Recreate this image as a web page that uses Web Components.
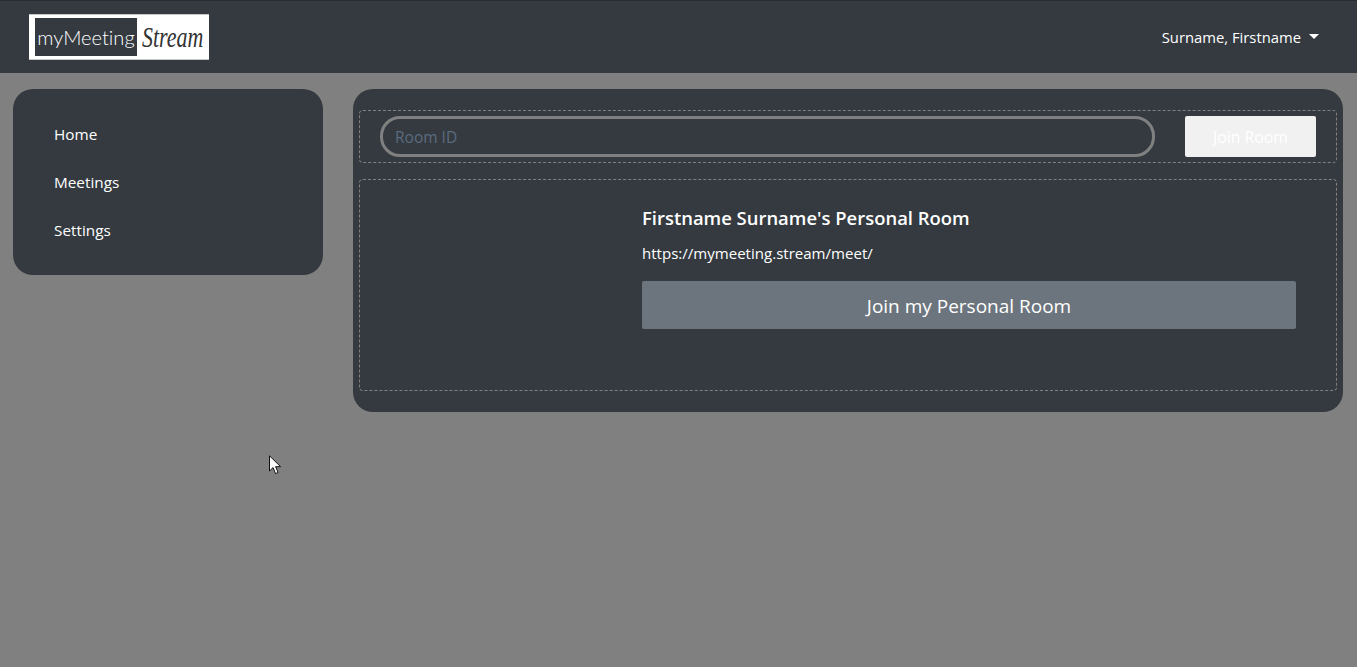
<!DOCTYPE html>
<html lang="en">
<head>
<meta charset="utf-8">
<title>myMeeting Stream</title>
<style>
  html, body { margin: 0; height: 100%; }
  body {
    background: #808080;
    color: #fff;
    font-family: "Open Sans", "Noto Sans", sans-serif;
    font-size: 15px;
  }
</style>
</head>
<body>
<app-shell>
  <top-bar user="Surname, Firstname"></top-bar>
  <side-nav slot="side">
    <nav-link>Home</nav-link>
    <nav-link>Meetings</nav-link>
    <nav-link>Settings</nav-link>
  </side-nav>
  <room-panel slot="main">
    <join-form></join-form>
    <personal-room owner="Firstname Surname's Personal Room" url="https://mymeeting.stream/meet/"></personal-room>
  </room-panel>
  <mouse-cursor></mouse-cursor>
</app-shell>

<script>
// small helper so that each component only has to declare its html
function shadow(el, html) {
  el.attachShadow({mode: 'open'})
  el.shadowRoot.innerHTML = html
}

class AppShell extends HTMLElement {
  constructor() {
    super()
    shadow(this, `
      <style>
        :host { display: block; position: relative; min-height: 667px; }
        .cols { display: flex; align-items: flex-start; gap: 30px; padding: 16px 14px 0 13px; }
      </style>
      <slot></slot>
      <div class="cols">
        <slot name="side"></slot>
        <slot name="main"></slot>
      </div>`)
  }
}

class TopBar extends HTMLElement {
  constructor() {
    super()
    shadow(this, `
      <style>
        :host {
          display: flex; align-items: center; justify-content: space-between;
          box-sizing: border-box; height: 73px; padding: 0 38px 0 29px;
          background: #343a40; border-top: 1px solid #2a2d30;
        }
        .logo {
          display: flex; align-items: center; box-sizing: border-box; overflow: hidden;
          width: 180px; height: 46px; padding: 3px 0 3px 6px; background: #fff;
          box-shadow: inset 0 1px #c4c6c9, inset 0 -1px #c4c6c9;
        }
        .my {
          flex: none; width: 102px; height: 38px; background: #343a40; color: #fff;
          font: 300 20.1px/38px Lato, sans-serif; text-align: center; white-space: nowrap;
          font-variant-ligatures: none;
        }
        .stream {
          display: inline-block; flex: none; margin-left: 5px; color: #333;
          font: italic 400 30px/38px "Liberation Serif", serif;
          transform: scaleX(.73); transform-origin: left center;
        }
        .user { display: flex; align-items: center; gap: 8px; font-size: 14.8px; }
        .caret {
          width: 0; height: 0; margin-top: -2px;
          border-top: 5px solid #fff; border-left: 5px solid transparent; border-right: 5px solid transparent;
        }
      </style>
      <div class="logo"><div class="my">myMeeting</div><span class="stream">Stream</span></div>
      <div class="user"><span id="name"></span><i class="caret"></i></div>`)
    this.shadowRoot.querySelector('#name').textContent = this.getAttribute('user')
  }
}

class SideNav extends HTMLElement {
  constructor() {
    super()
    shadow(this, `
      <style>
        :host {
          display: flex; flex-direction: column; flex: none; box-sizing: border-box;
          width: 310px; height: 186px; padding: 21px 0 0 41px;
          background: #343a40; border-radius: 20px;
        }
      </style>
      <slot></slot>`)
  }
}

class NavLink extends HTMLElement {
  constructor() {
    super()
    shadow(this, `
      <style>
        :host { display: block; height: 48px; line-height: 48px; color: #fff; font-size: 15.3px; }
      </style>
      <slot></slot>`)
  }
}

class RoomPanel extends HTMLElement {
  constructor() {
    super()
    shadow(this, `
      <style>
        :host {
          display: flex; flex-direction: column; gap: 16px; flex: 1; box-sizing: border-box;
          height: 323px; padding: 21px 6px 0;
          background: #343a40; border-radius: 20px;
        }
      </style>
      <slot></slot>`)
  }
}

class JoinForm extends HTMLElement {
  constructor() {
    super()
    shadow(this, `
      <style>
        :host {
          display: flex; gap: 30px; box-sizing: border-box; height: 53px; padding: 5px 20px 0;
          border: 1px dashed #808080; border-radius: 4px;
        }
        input {
          flex: 1; min-width: 0; box-sizing: border-box; height: 41px; padding: 0 12px;
          background: transparent; border: 3px solid #808080; border-radius: 20px;
          color: #fff; font: 400 15.5px "Open Sans", sans-serif; outline: none;
        }
        input::placeholder { color: #5b6b7d; opacity: 1; }
        button {
          flex: none; width: 131px; height: 41px; padding: 0;
          background: #f1f1f1; border: 0; border-radius: 2px;
          color: #fff; font: 400 15.8px "Open Sans", sans-serif;
        }
      </style>
      <input type="text" placeholder="Room ID">
      <button>Join Room</button>`)
  }
}

class PersonalRoom extends HTMLElement {
  constructor() {
    super()
    shadow(this, `
      <style>
        :host {
          display: block; box-sizing: border-box; height: 212px; padding: 25px 40px 0 282px;
          border: 1px dashed #808080; border-radius: 4px;
        }
        h2 { margin: 0; font-size: 18.45px; font-weight: 600; line-height: 26px; }
        p { margin: 10px 0 0; font-size: 15.05px; line-height: 24px; }
        button {
          display: block; width: 100%; height: 48px; margin-top: 16px; padding: 1px 0 0;
          background: #6c757d; border: 0; border-radius: 2px;
          color: #fff; font: 400 19px "Open Sans", sans-serif;
        }
      </style>
      <h2 id="owner"></h2>
      <p id="url"></p>
      <button>Join my Personal Room</button>`)
    this.shadowRoot.querySelector('#owner').textContent = this.getAttribute('owner')
    this.shadowRoot.querySelector('#url').textContent = this.getAttribute('url')
  }
}

// the pointer caught in the screenshot, it lies over the page
class MouseCursor extends HTMLElement {
  constructor() {
    super()
    shadow(this, `
      <style>
        :host { position: absolute; left: 269px; top: 455px; width: 13px; height: 20px; line-height: 0; }
      </style>
      <svg width="13" height="20" viewBox="0 0 13 20">
        <path d="M.5.8V16l3.6-3.4 2.4 6 2.6-1.1-2.5-5.8h5z" fill="#fff" stroke="#111" stroke-width="1"/>
      </svg>`)
  }
}

customElements.define('app-shell', AppShell)
customElements.define('top-bar', TopBar)
customElements.define('side-nav', SideNav)
customElements.define('nav-link', NavLink)
customElements.define('room-panel', RoomPanel)
customElements.define('join-form', JoinForm)
customElements.define('personal-room', PersonalRoom)
customElements.define('mouse-cursor', MouseCursor)
</script>
</body>
</html>
